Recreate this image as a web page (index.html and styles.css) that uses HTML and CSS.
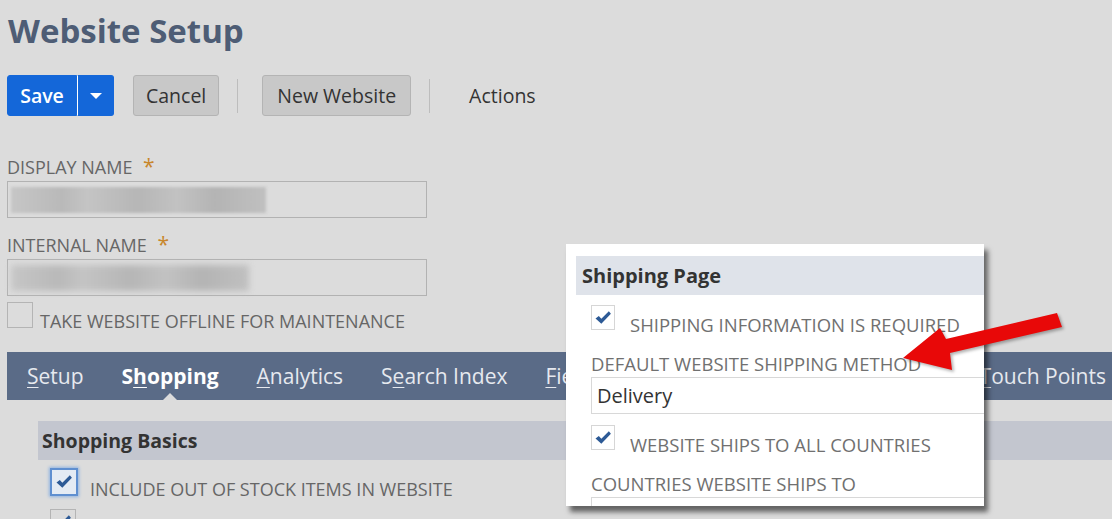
FILE: index.html
```html
<!DOCTYPE html>
<html lang="en">
<head>
    <meta charset="UTF-8">
    <title>Website Setup</title>
    <link rel="stylesheet" href="styles.css">
</head>
<body>
    <div class="page">
        <h1 class="page-title">Website Setup</h1>

        <div class="toolbar">
            <div class="split-btn">
                <button class="btn btn-primary">Save</button>
                <button class="btn btn-primary btn-caret"><span class="caret"></span></button>
            </div>
            <button class="btn">Cancel</button>
            <span class="toolbar-sep"></span>
            <button class="btn btn-wide">New Website</button>
            <span class="toolbar-sep"></span>
            <span class="toolbar-link">Actions</span>
        </div>

        <div class="field field-first">
            <label class="field-label">DISPLAY NAME <span class="req">*</span></label>
            <div class="text-input"><span class="blurred blurred-long"></span></div>
        </div>

        <div class="field">
            <label class="field-label">INTERNAL NAME <span class="req">*</span></label>
            <div class="text-input"><span class="blurred blurred-short"></span></div>
        </div>

        <div class="check-row offline-row">
            <span class="checkbox"></span>
            <span class="check-label">TAKE WEBSITE OFFLINE FOR MAINTENANCE</span>
        </div>

        <nav class="tabs">
            <span class="tab"><u>S</u>etup</span>
            <span class="tab tab-active">S<u>h</u>opping</span>
            <span class="tab"><u>A</u>nalytics</span>
            <span class="tab">S<u>e</u>arch Index</span>
            <span class="tab"><u>F</u>ields</span>
            <span class="tab tab-far"><u>T</u>ouch Points</span>
        </nav>

        <section class="subtab">
            <div class="section-head">Shopping Basics</div>
            <div class="check-row">
                <span class="checkbox checked focused">
                    <svg viewBox="0 0 24 24" width="20" height="20"><path d="M3 12.5 L7 9.5 L10 13 L19 4 L21.5 7 L10 19 Z" fill="#2d5a96"/></svg>
                </span>
                <span class="check-label">INCLUDE OUT OF STOCK ITEMS IN WEBSITE</span>
            </div>
            <div class="check-row">
                <span class="checkbox checked">
                    <svg viewBox="0 0 24 24" width="20" height="20"><path d="M3 12.5 L7 9.5 L10 13 L19 4 L21.5 7 L10 19 Z" fill="#2d5a96"/></svg>
                </span>
            </div>
        </section>

        <!-- cropped shipping page panel shown over the form -->
        <div class="popup">
            <div class="popup-head">Shipping Page</div>
            <div class="popup-body">
                <div class="check-row">
                    <span class="checkbox checked light">
                        <svg viewBox="0 0 24 24" width="20" height="20"><path d="M3 12.5 L7 9.5 L10 13 L19 4 L21.5 7 L10 19 Z" fill="#2d5a96"/></svg>
                    </span>
                    <span class="check-label">SHIPPING INFORMATION IS REQUIRED</span>
                </div>
                <div class="popup-label">DEFAULT WEBSITE SHIPPING METHOD</div>
                <div class="select-box">Delivery</div>
                <div class="check-row">
                    <span class="checkbox checked light">
                        <svg viewBox="0 0 24 24" width="20" height="20"><path d="M3 12.5 L7 9.5 L10 13 L19 4 L21.5 7 L10 19 Z" fill="#2d5a96"/></svg>
                    </span>
                    <span class="check-label">WEBSITE SHIPS TO ALL COUNTRIES</span>
                </div>
                <div class="popup-label">COUNTRIES WEBSITE SHIPS TO</div>
                <div class="select-box"></div>
            </div>
        </div>

        <svg class="arrow" width="1112" height="525" viewBox="0 0 1112 525">
            <polygon points="1057,313 946,339 940,328 903,358 952,370 950,353 1062,327" fill="#e80808"/>
        </svg>
    </div>
</body>
</html>
```

FILE: styles.css
```css
* {
    margin: 0;
    padding: 0;
    box-sizing: border-box;
}

body {
    background: #fff;
    font-family: 'Open Sans', 'Liberation Sans', sans-serif;
    color: #333;
}

.page {
    position: relative;
    height: 519px;
    overflow: hidden;
    background: #dcdcdc;
    padding-left: 7px;
}

.page-title {
    font-size: 33px;
    font-weight: 700;
    color: #4e5d75;
    line-height: 40px;
    padding-top: 11px;
    padding-left: 1px;
}

/* toolbar */
.toolbar {
    display: flex;
    align-items: center;
    margin-top: 24px;
    height: 41px;
}

.btn {
    height: 41px;
    padding: 0 12px;
    border: 1px solid #b4b4b4;
    border-radius: 3px;
    background: #c8c8c8;
    color: #333;
    font-family: inherit;
    font-size: 19.5px;
}

.btn-wide {
    padding: 0 14px;
}

.split-btn {
    display: flex;
    margin-right: 19px;
}

.btn-primary {
    background: #1467d9;
    border-color: #1467d9;
    color: #fff;
    font-weight: 600;
    width: 70px;
    border-radius: 3px 0 0 3px;
}

.btn-caret {
    width: 37px;
    padding: 0;
    border-left: 1px solid #fff;
    border-radius: 0 3px 3px 0;
    display: flex;
    align-items: center;
    justify-content: center;
}

.caret {
    border-left: 6px solid transparent;
    border-right: 6px solid transparent;
    border-top: 6px solid #fff;
}

.toolbar-sep {
    width: 1px;
    height: 34px;
    background: #bdbdbd;
    margin: 0 24px 0 18px;
}

.toolbar-link {
    font-size: 19.5px;
    margin-left: 15px;
    color: #333;
}

/* fields */
.field-first {
    margin-top: 38px;
}

.field + .field {
    margin-top: 14px;
}

.field-label {
    display: block;
    font-size: 18px;
    color: #666;
    line-height: 24px;
    margin-bottom: 2px;
}

.req {
    color: #c8872c;
    font-size: 21px;
    margin-left: 6px;
}

.text-input {
    width: 420px;
    height: 37px;
    border: 1px solid #b2b2b2;
    padding: 5px 3px;
}

.blurred {
    display: block;
    height: 26px;
    background: linear-gradient(90deg, #c6c6c6, #b9b9b9 20%, #c4c4c4 30%, #b6b6b6 50%, #c2c2c2 65%, #b4b4b4 80%, #c0c0c0);
    filter: blur(1.5px);
}

.blurred-long {
    width: 255px;
}

.blurred-short {
    width: 238px;
    filter: blur(3px);
}

/* checkboxes */
.check-row {
    display: flex;
    align-items: flex-end;
}

.checkbox {
    width: 26px;
    height: 26px;
    border: 1px solid #b4b4b4;
    display: flex;
    align-items: center;
    justify-content: center;
    flex-shrink: 0;
}

.checkbox.light {
    border-color: #d6d6d6;
    background: #fff;
}

.checkbox.focused {
    width: 28px;
    height: 28px;
    border: 2px solid #5f8fd0;
    box-shadow: 0 0 3px 1px #8fb2e0;
    background: #e4ebf4;
}

.check-label {
    font-size: 18px;
    line-height: 24px;
    color: #666;
    margin-left: 7px;
    margin-bottom: -5px;
}

.offline-row {
    margin-top: 6px;
}

/* tabs */
.tabs {
    display: flex;
    height: 48px;
    margin-top: 24px;
    background: #5a6b87;
    padding-left: 1px;
    white-space: nowrap;
}

.tab {
    position: relative;
    padding: 0 19px;
    font-size: 21px;
    line-height: 48px;
    color: #e6e9ef;
}

.tab u {
    text-decoration-thickness: 1px;
    text-underline-offset: 3px;
}

.tab-active {
    font-weight: 700;
    color: #fff;
}

.tab-active::after {
    content: "";
    position: absolute;
    left: 50%;
    bottom: 0;
    margin-left: -7px;
    border-left: 7px solid transparent;
    border-right: 7px solid transparent;
    border-bottom: 7px solid #dcdcdc;
}

.tab-far {
    margin-left: 340px;
}

.subtab {
    padding-left: 31px;
    margin-top: 21px;
}

.section-head {
    height: 39px;
    line-height: 39px;
    background: #c3c6cf;
    padding-left: 4px;
    font-size: 19.5px;
    font-weight: 700;
    color: #333;
}

.subtab .check-row {
    padding-left: 12px;
    margin-top: 8px;
}

.subtab .check-label {
    margin-left: 12px;
}

.subtab .check-row + .check-row {
    margin-top: 13px;
}

/* shipping panel */
.popup {
    position: absolute;
    left: 566px;
    top: 244px;
    width: 418px;
    height: 262px;
    background: #fff;
    padding: 12px 0 0 10px;
    overflow: hidden;
    box-shadow: 4px 6px 5px rgba(0, 0, 0, 0.55);
}

.popup-head {
    height: 39px;
    line-height: 39px;
    background: #dfe3ea;
    padding-left: 6px;
    font-size: 20px;
    font-weight: 700;
    color: #333;
}

.popup-body {
    padding-left: 15px;
}

.popup-body .check-row {
    margin-top: 10px;
}

.popup-body .checkbox {
    width: 24px;
    height: 25px;
}

.popup-body .check-row + .popup-label {
    margin-top: 23px;
}

.popup-body .select-box + .check-row {
    margin-top: 11px;
}

.popup-body .check-label {
    margin-left: 15px;
    margin-bottom: -7px;
    font-size: 18.5px;
    color: #707070;
}

.popup-label {
    font-size: 18.5px;
    color: #707070;
    line-height: 22px;
}

.select-box {
    width: 420px;
    height: 37px;
    margin-top: 2px;
    border: 1px solid #d8d8d8;
    padding-left: 5px;
    font-size: 20px;
    line-height: 35px;
    color: #333;
}

.arrow {
    position: absolute;
    left: 0;
    top: 0;
    filter: drop-shadow(2px 2px 1.5px rgba(0, 0, 0, 0.3));
}
```
